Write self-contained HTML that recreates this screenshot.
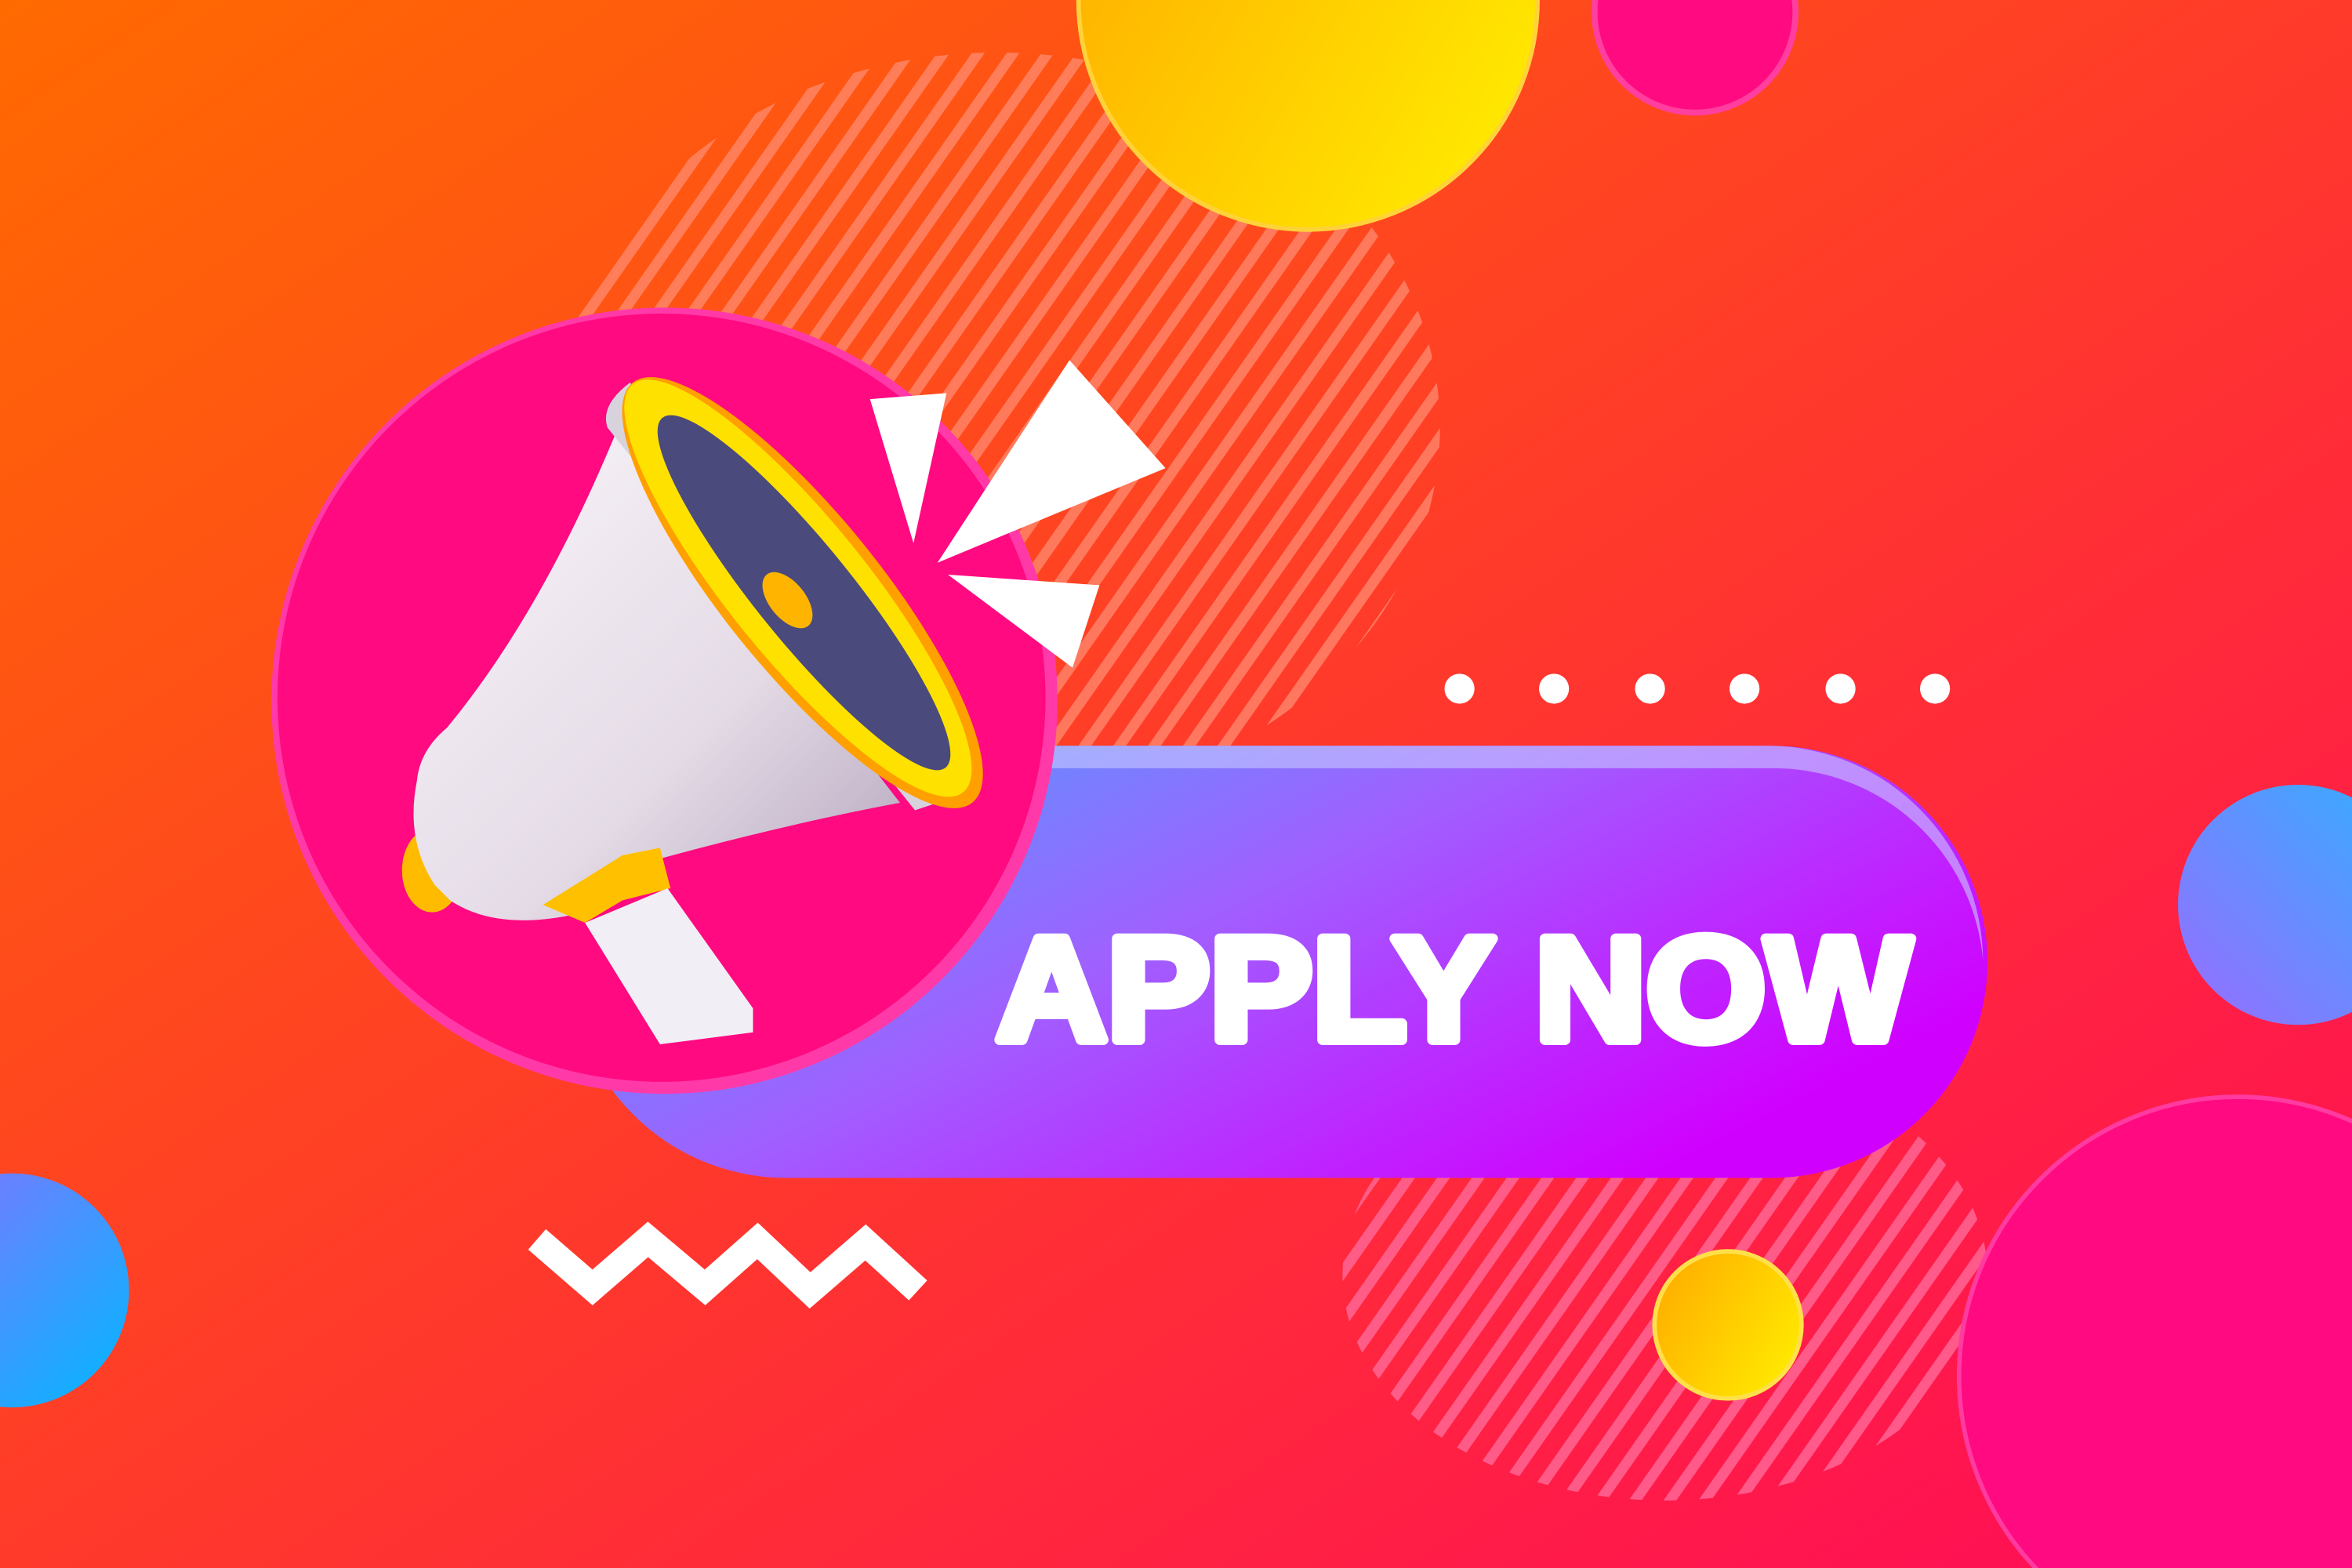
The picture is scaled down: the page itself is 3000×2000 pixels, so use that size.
<!DOCTYPE html>
<html><head><style>html,body{margin:0;padding:0;width:3000px;height:2000px;overflow:hidden;position:relative}svg{display:block;position:absolute;left:0;top:0}</style></head>
<body>
<svg width="3000" height="2000" viewBox="0 0 1568 1045" preserveAspectRatio="none" xmlns="http://www.w3.org/2000/svg">
<defs>
<linearGradient id="bg" x1="0" y1="0" x2="1" y2="1"><stop offset="0" stop-color="#ff6a00"/><stop offset="0.5" stop-color="#ff3a2a"/><stop offset="1" stop-color="#ff0a5a"/></linearGradient>
<pattern id="st" width="19" height="19" patternUnits="userSpaceOnUse" patternTransform="rotate(35)"><rect width="7" height="19" fill="#ff8a70" opacity="0.75"/></pattern>
<pattern id="st2" width="19" height="19" patternUnits="userSpaceOnUse" patternTransform="rotate(35)"><rect width="7" height="19" fill="#ff6a9a" opacity="0.8"/></pattern>
<linearGradient id="yel" x1="0" y1="0" x2="1" y2="0.6"><stop offset="0" stop-color="#ffa800"/><stop offset="1" stop-color="#ffe600"/></linearGradient>
<linearGradient id="blu" x1="0" y1="1" x2="1" y2="0"><stop offset="0" stop-color="#9a6cff"/><stop offset="1" stop-color="#30b0ff"/></linearGradient>
<linearGradient id="blu2" x1="1" y1="1" x2="0" y2="0"><stop offset="0" stop-color="#00b8ff"/><stop offset="1" stop-color="#8a70ff"/></linearGradient>
<linearGradient id="pill" x1="0" y1="0" x2="1" y2="0.6"><stop offset="0" stop-color="#40aaff"/><stop offset="0.5" stop-color="#a060ff"/><stop offset="1" stop-color="#d000ff"/></linearGradient>
<linearGradient id="body" x1="0" y1="0" x2="1" y2="1"><stop offset="0" stop-color="#fbf6fb"/><stop offset="0.6" stop-color="#e4dbe6"/><stop offset="1" stop-color="#b3a4bc"/></linearGradient>
</defs>
<rect width="1568" height="1045" fill="url(#bg)"/>
<ellipse cx="665" cy="285" rx="295" ry="250" fill="url(#st)"/>
<ellipse cx="1110" cy="850" rx="215" ry="150" fill="url(#st2)"/>
<circle cx="872" cy="0" r="153" fill="url(#yel)" stroke="#ffd23a" stroke-width="3"/>
<circle cx="1130" cy="8" r="67" fill="#ff0a80" stroke="#ff3ea0" stroke-width="4"/>
<circle cx="1532" cy="603" r="80" fill="url(#blu)"/>
<circle cx="1492" cy="917" r="186" fill="#ff0a80" stroke="#ff3aa0" stroke-width="3"/>
<circle cx="8" cy="860" r="78" fill="url(#blu2)"/>
<circle cx="1152" cy="883" r="49" fill="url(#yel)" stroke="#ffe04a" stroke-width="3"/>
<g fill="#fff"><circle cx="973" cy="459" r="10"/><circle cx="1036" cy="459" r="10"/><circle cx="1100" cy="459" r="10"/><circle cx="1163" cy="459" r="10"/><circle cx="1227" cy="459" r="10"/><circle cx="1290" cy="459" r="10"/></g>
<polyline points="358,826 395,858 432,826 470,858 505,827 540,860 577,828 612,860" fill="none" stroke="#fff" stroke-width="18"/>
<rect x="380" y="497" width="945" height="288" rx="144" fill="url(#pill)"/>
<path d="M600,512 L1180,512 A140,140 0 0 1 1322,640 A144,144 0 0 0 1180,497 L600,497Z" fill="#c8c8ff" opacity="0.6"/>
<text x="664" y="693" font-family="Liberation Sans, sans-serif" font-weight="bold" font-size="98" fill="#fff" stroke="#fff" stroke-width="7" stroke-linejoin="round" textLength="610" lengthAdjust="spacingAndGlyphs">APPLY NOW</text>
<circle cx="443" cy="467" r="262" fill="#ff3aa8"/>
<circle cx="441" cy="465" r="256" fill="#ff0a80"/>
<polygon points="580,266 631,262 609,362" fill="#fff"/>
<polygon points="713,240 777,312 625,375" fill="#fff"/>
<polygon points="632,383 733,390 715,445" fill="#fff"/>
<ellipse cx="288" cy="580" rx="20" ry="28" fill="#ffbb00"/>
<path d="M410,290 L600,535 Q520,550 430,575 L380,610 Q330,620 300,600 L290,590 Q270,560 278,520 Q280,500 298,485 Q360,410 410,290Z" fill="url(#body)"/>
<path d="M405,285 Q400,270 420,255 L640,530 L610,540 Z" fill="#d8d2dc"/>
<ellipse cx="535" cy="395" rx="180" ry="52" transform="rotate(51 535 395)" fill="#ff9f00"/>
<ellipse cx="532" cy="392" rx="175" ry="46" transform="rotate(51 532 392)" fill="#ffe100"/>
<ellipse cx="536" cy="395" rx="150" ry="32" transform="rotate(51 536 395)" fill="#4a4a7c"/>
<ellipse cx="525" cy="400" rx="22" ry="12" transform="rotate(51 525 400)" fill="#ffb400"/>
<polygon points="362,603 415,570 440,565 447,592 415,600 390,615" fill="#ffc000"/>
<polygon points="390,615 445,592 502,672 502,688 440,696" fill="#f2eef5"/>
</svg>
</body></html>
